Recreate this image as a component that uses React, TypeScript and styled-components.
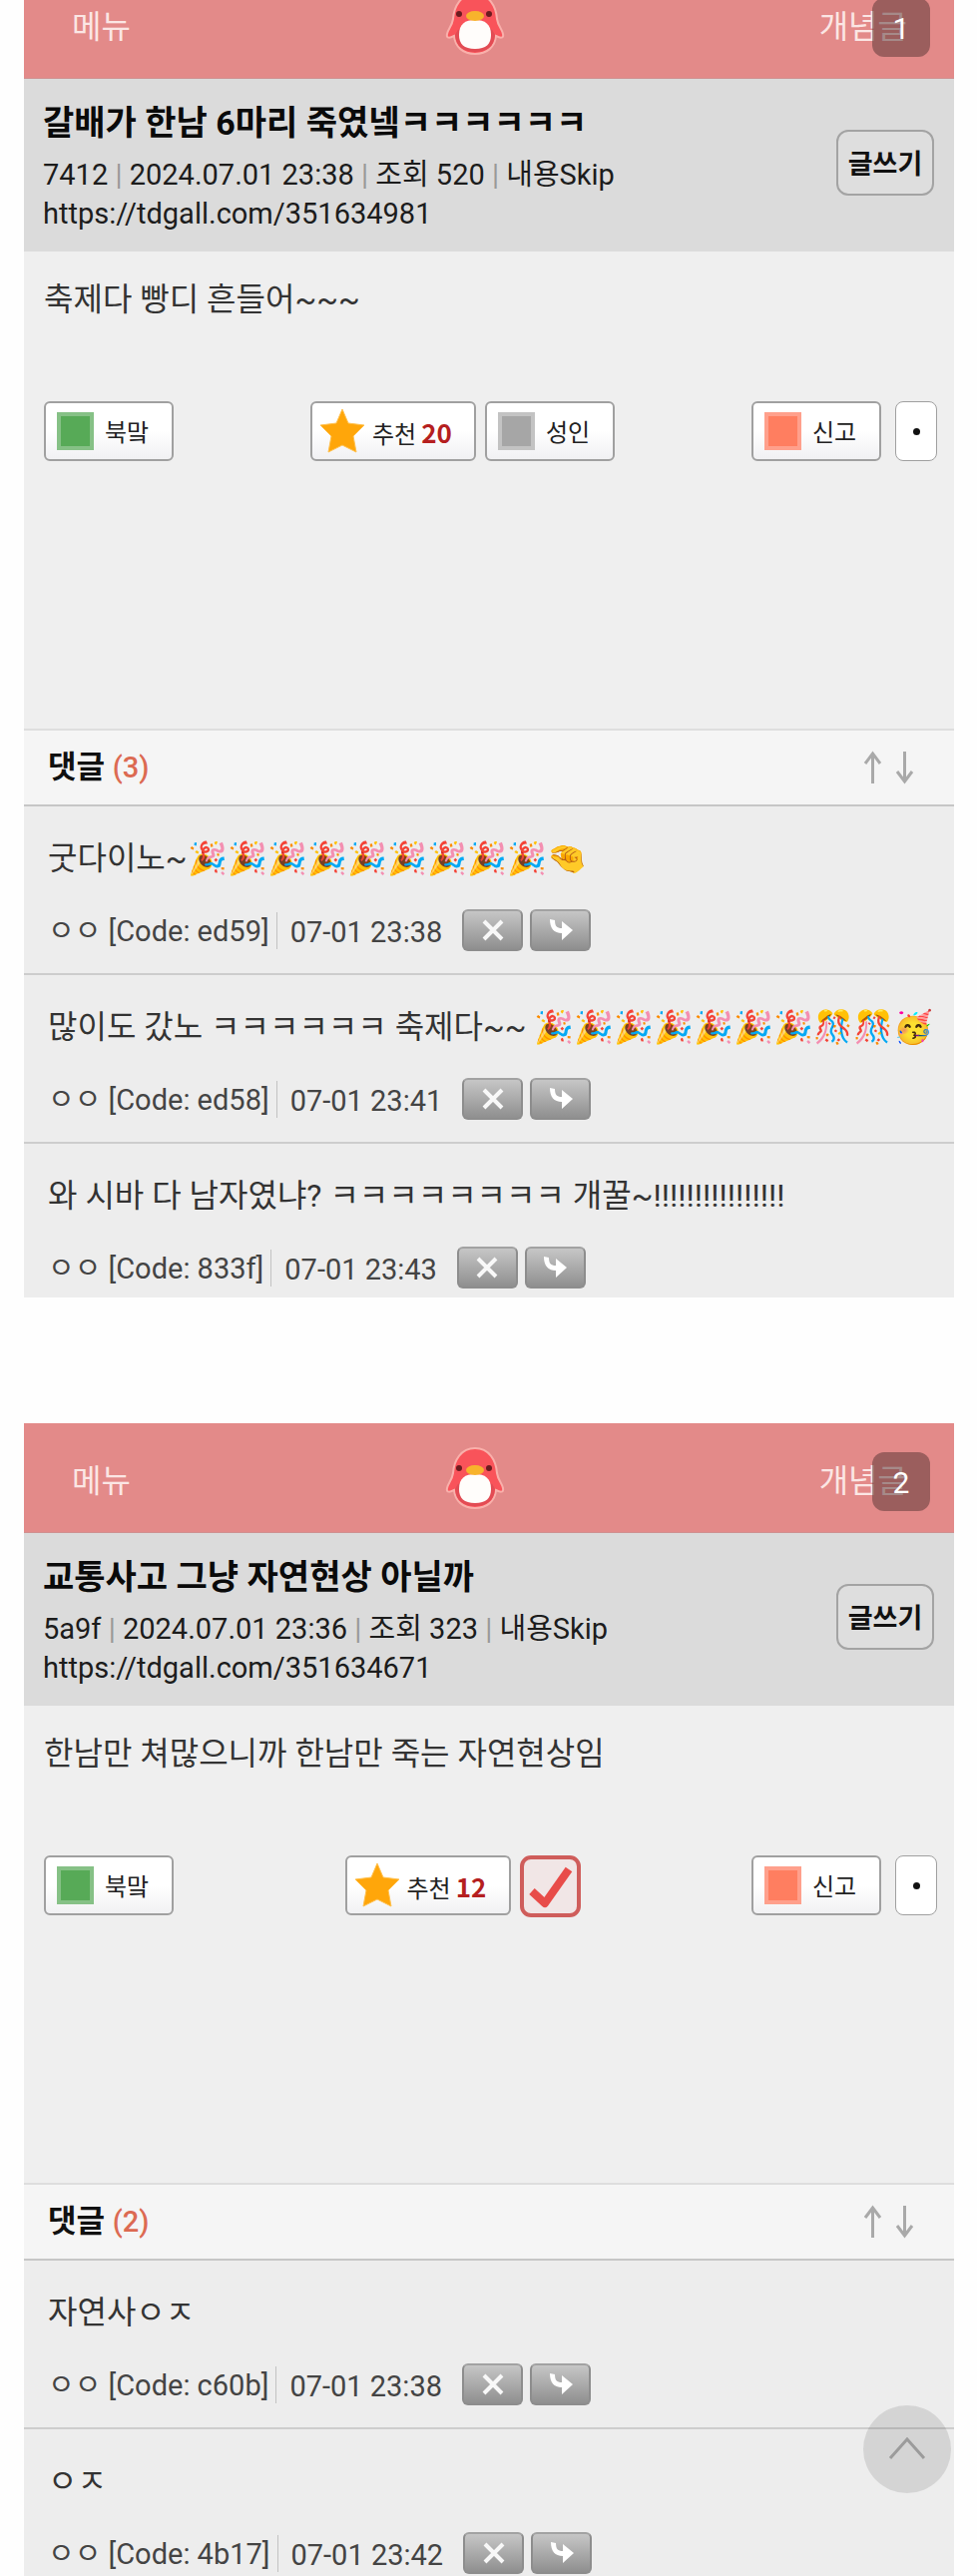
import React from "react";
import styled, { createGlobalStyle } from "styled-components";

const Global = createGlobalStyle`
  *, *::before, *::after { box-sizing: border-box; }
  body { margin: 0; background: #fefefe; font-family: Roboto, "Noto Sans CJK KR", sans-serif; color: #111; }
  h2, h3, p, ul { margin: 0; padding: 0; }
  button { font-family: inherit; cursor: pointer; padding: 0; }
`;

const Page = styled.main`
  display: flex;
  flex-direction: column;
  gap: 126px;
  padding: 0 23px 0 24px;
`;

const Card = styled.article`
  overflow: hidden;
  background: #efefef;
`;

const TopBar = styled.header<{ $scrolled?: boolean }>`
  position: relative;
  display: grid;
  grid-template-columns: 13fr auto 14fr;
  align-items: center;
  height: 110px;
  margin-top: ${(p) => (p.$scrolled ? "-31px" : "0")};
  padding: 0 47px 0 48px;
  background: #e38a89;
  border-bottom: 1px solid #cf9090;
`;

const NavLink = styled.a`
  padding-top: 6px;
  font-size: 32px;
  line-height: 48px;
  color: #fbe6e4;
  text-decoration: none;
  &:last-of-type { text-align: right; }
`;

const PageBadge = styled.span`
  position: absolute;
  top: 29px;
  right: 24px;
  width: 58px;
  height: 59px;
  border-radius: 12px;
  background: rgba(88, 54, 54, 0.52);
  color: #fff;
  font-size: 30px;
  line-height: 62px;
  text-align: center;
`;

const PostHead = styled.section`
  display: flex;
  align-items: center;
  justify-content: space-between;
  height: 173px;
  padding: 0 20px 0 19px;
  background: #dbdbdb;
`;

const Title = styled.h2`
  font-size: 34px;
  line-height: 50px;
  font-weight: 700;
  color: #0a0a0a;
`;

const Meta = styled.p`
  margin-top: 8px;
  font-size: 29px;
  line-height: 39px;
  color: #1c1c1c;
`;

const Bar = styled.span`
  color: #999;
`;

const PlainLink = styled.a`
  display: block;
  color: inherit;
  text-decoration: none;
`;

const WriteButton = styled.button`
  width: 98px;
  height: 66px;
  margin-bottom: 6px;
  border: 2px solid #a3a3a3;
  border-radius: 12px;
  background: #dedede;
  font-size: 27px;
  font-weight: 700;
  color: #111;
`;

const Body = styled.section`
  display: flex;
  flex-direction: column;
  gap: 78px;
  padding: 24px 17px 268px 20px;
`;

const BodyText = styled.p`
  font-size: 32px;
  line-height: 48px;
  color: #333;
`;

const Actions = styled.div`
  display: flex;
  justify-content: space-between;
`;

const Group = styled.div<{ $gap: number }>`
  display: flex;
  gap: ${(p) => p.$gap}px;
`;

const ActionButton = styled.button<{ $wide?: boolean }>`
  display: flex;
  align-items: center;
  gap: ${(p) => (p.$wide ? 8 : 11)}px;
  width: ${(p) => (p.$wide ? 166 : 130)}px;
  height: 60px;
  padding-left: ${(p) => (p.$wide ? 8 : 11)}px;
  border: 2px solid #a0a0a0;
  border-radius: 6px;
  background: linear-gradient(#fff 50%, #f1f1f3);
  font-size: 24px;
  line-height: 36px;
  color: #222;
`;

const ActionLabel = styled.span`
  padding-top: 4px;
`;

const Swatch = styled.span<{ $color: string; $edge: string }>`
  width: 37px;
  height: 38px;
  border: 4px solid ${(p) => p.$edge};
  background: ${(p) => p.$color};
`;

const Count = styled.strong`
  margin-left: 5px;
  font-family: "Noto Sans CJK KR", sans-serif;
  font-size: 26px;
  color: #b51f1f;
`;

const MoreButton = styled.button`
  display: grid;
  place-items: center;
  width: 42px;
  height: 60px;
  border: 1px solid #a0a0a0;
  border-radius: 8px;
  background: #fff;
`;

const Dot = styled.span`
  width: 7px;
  height: 7px;
  border-radius: 50%;
  background: #111;
`;

const CheckButton = styled.button`
  width: 61px;
  height: 62px;
  margin-bottom: -2px;
  border: 0;
  background: none;
`;

const CommentBar = styled.header`
  display: flex;
  align-items: center;
  justify-content: space-between;
  height: 78px;
  padding: 0 40px 0 24px;
  border-top: 2px solid #dedede;
  border-bottom: 2px solid #c6c6c6;
  background: #f5f5f5;
`;

const CommentTitle = styled.h3`
  font-size: 31px;
  line-height: 44px;
  font-weight: 700;
`;

const CommentCount = styled.span`
  font-size: 29px;
  font-weight: 500;
  color: #dc6a52;
`;

const SortButton = styled.button`
  width: 19px;
  height: 34px;
  border: 0;
  background: none;
`;

const CommentList = styled.ul`
  list-style: none;
  background: #ededed;
`;

const Comment = styled.li<{ $end?: number }>`
  display: flex;
  flex-direction: column;
  gap: 27px;
  padding: 28px 20px ${(p) => p.$end ?? 22}px 24px;
  & + & { border-top: 2px solid #cdcdcd; }
`;

const CommentText = styled.p`
  height: 48px;
  font-size: 32px;
  line-height: 48px;
  color: #333;
`;

const CommentMeta = styled.div`
  display: flex;
  align-items: center;
  height: 42px;
  font-size: 29px;
  line-height: 34px;
  color: #444;
`;

const Author = styled.span`
  padding-top: 2px;
`;

const When = styled.time`
  margin: 0 20px 0 7px;
  padding: 3px 0 0 13px;
  border-left: 1px solid #c2c2c2;
`;

const ToolButton = styled.button`
  display: grid;
  place-items: center;
  width: 61px;
  height: 42px;
  margin-right: 7px;
  border: 2px solid #8d8d8d;
  border-top-color: #a2a2a2;
  border-radius: 6px;
  background: linear-gradient(#c6c6c6, #8f8f8f);
`;

const TopButton = styled.button`
  position: fixed;
  right: 26px;
  bottom: 83px;
  width: 88px;
  height: 88px;
  border: 0;
  border-radius: 50%;
  background: rgba(0, 0, 0, 0.1);
`;

const Penguin = () => (
  <svg width="62" height="62" viewBox="0 0 62 62" role="img" aria-label="tdgall">
    <path d="M31 1C17 1 10 13 9 26C8 33 4 36 3 41C2 46 6 45 10 43C11 54 19 61 31 61C43 61 51 54 52 43C56 45 60 46 59 41C58 36 54 33 53 26C52 13 45 1 31 1Z" fill="#f9535a" stroke="#f9b0ab" strokeWidth="2" />
    <path d="M11 42C12 54 20 59 31 59C42 59 50 54 51 42C49 38 48 36 46 36H16C14 36 13 38 11 42Z" fill="#e24c54" />
    <path d="M15 42C15 31 21 27 31 27C41 27 47 31 47 42C47 51 42 56 31 56C20 56 15 51 15 42Z" fill="#fffdfb" />
    <ellipse cx="31" cy="23" rx="9" ry="5" fill="#f8b32c" />
    <circle cx="15" cy="21" r="3" fill="#6b1c1f" />
    <circle cx="45" cy="21" r="3" fill="#6b1c1f" />
  </svg>
);

const Star = () => (
  <svg width="44" height="44" viewBox="0 0 44 44" aria-hidden="true">
    <path d="M22 0L28 14L44 16L33 27L36 43L22 36L8 43L11 27L0 16L16 14Z" fill="#ffa60a" stroke="#ffc04d" strokeWidth="1" />
  </svg>
);

const Check = () => (
  <svg width="61" height="62" viewBox="0 0 61 62" aria-hidden="true">
    <rect x="2" y="2" width="57" height="58" rx="9" fill="#f1e6e6" stroke="#cf5d5b" strokeWidth="4" />
    <path d="M12 36L25 48L49 14" fill="none" stroke="#e84c49" strokeWidth="8" strokeLinejoin="round" />
  </svg>
);

const SortArrow = ({ down }: { down?: boolean }) => (
  <svg width="19" height="34" viewBox="0 0 19 34" aria-hidden="true">
    <path d={down ? "M9.5 1V31M2 21L9.5 31L17 21" : "M9.5 33V3M2 13L9.5 3L17 13"} fill="none" stroke="#a9a9a9" strokeWidth="3" />
  </svg>
);

type PostData = {
  page: number;
  title: string;
  author: string;
  date: string;
  views: number;
  url: string;
  body: string;
  likes: number;
  liked?: boolean;
  comments: { text: string; code: string; time: string; end?: number }[];
};

const posts: PostData[] = [
  {
    page: 1,
    title: "갈배가 한남 6마리 죽였넼ㅋㅋㅋㅋㅋㅋ",
    author: "7412",
    date: "2024.07.01 23:38",
    views: 520,
    url: "https://tdgall.com/351634981",
    body: "축제다 빵디 흔들어~~~",
    likes: 20,
    comments: [
      { text: "굿다이노~🎉🎉🎉🎉🎉🎉🎉🎉🎉🤏", code: "ed59", time: "07-01 23:38" },
      { text: "많이도 갔노 ㅋㅋㅋㅋㅋㅋ 축제다~~ 🎉🎉🎉🎉🎉🎉🎉🎊🎊🥳", code: "ed58", time: "07-01 23:41" },
      { text: "와 시바 다 남자였냐? ㅋㅋㅋㅋㅋㅋㅋㅋ 개꿀~!!!!!!!!!!!!!!!!", code: "833f", time: "07-01 23:43", end: 9 },
    ],
  },
  {
    page: 2,
    title: "교통사고 그냥 자연현상 아닐까",
    author: "5a9f",
    date: "2024.07.01 23:36",
    views: 323,
    url: "https://tdgall.com/351634671",
    body: "한남만 쳐많으니까 한남만 죽는 자연현상임",
    likes: 12,
    liked: true,
    comments: [
      { text: "자연사ㅇㅈ", code: "c60b", time: "07-01 23:38" },
      { text: "ㅇㅈ", code: "4b17", time: "07-01 23:42", end: 2 },
    ],
  },
];

const Post = ({ post }: { post: PostData }) => (
  <Card>
    <TopBar $scrolled={post.page === 1}>
      <NavLink href="#menu">메뉴</NavLink>
      <Penguin />
      <NavLink href="#best">개념글</NavLink>
      <PageBadge>{post.page}</PageBadge>
    </TopBar>
    <PostHead>
      <div>
        <Title>{post.title}</Title>
        <Meta>
          {post.author} <Bar>|</Bar> {post.date} <Bar>|</Bar> 조회 {post.views} <Bar>|</Bar> 내용Skip
          <PlainLink href={post.url}>{post.url}</PlainLink>
        </Meta>
      </div>
      <WriteButton>글쓰기</WriteButton>
    </PostHead>
    <Body>
      <BodyText>{post.body}</BodyText>
      <Actions>
        <ActionButton>
          <Swatch $color="#57aa57" $edge="#86c186" />
          <ActionLabel>북맠</ActionLabel>
        </ActionButton>
        <Group $gap={9}>
          <ActionButton $wide>
            <Star />
            <ActionLabel>추천<Count>{post.likes}</Count></ActionLabel>
          </ActionButton>
          {post.liked ? (
            <CheckButton aria-label="추천 완료"><Check /></CheckButton>
          ) : (
            <ActionButton>
              <Swatch $color="#a6a6a6" $edge="#c3c3c3" />
              <ActionLabel>성인</ActionLabel>
            </ActionButton>
          )}
        </Group>
        <Group $gap={14}>
          <ActionButton>
            <Swatch $color="#ff7e60" $edge="#ffa08c" />
            <ActionLabel>신고</ActionLabel>
          </ActionButton>
          <MoreButton aria-label="더보기"><Dot /></MoreButton>
        </Group>
      </Actions>
    </Body>
    <CommentBar>
      <CommentTitle>댓글 <CommentCount>({post.comments.length})</CommentCount></CommentTitle>
      <Group $gap={13}>
        <SortButton aria-label="오래된 순"><SortArrow /></SortButton>
        <SortButton aria-label="최신 순"><SortArrow down /></SortButton>
      </Group>
    </CommentBar>
    <CommentList>
      {post.comments.map((c) => (
        <Comment key={c.code} $end={c.end}>
          <CommentText>{c.text}</CommentText>
          <CommentMeta>
            <Author>ㅇㅇ [Code: {c.code}]</Author>
            <When>{c.time}</When>
            <ToolButton aria-label="삭제">
              <svg width="28" height="26" viewBox="0 0 28 26"><path d="M5 4L23 22M23 4L5 22" stroke="#f8f8f8" strokeWidth="4" /></svg>
            </ToolButton>
            <ToolButton aria-label="답글">
              <svg width="28" height="26" viewBox="0 0 28 26"><path d="M3 2L8 3C8 9 10 11 15 11V4L26 13L15 23V16C7 16 3 11 3 2Z" fill="#fff" /></svg>
            </ToolButton>
          </CommentMeta>
        </Comment>
      ))}
    </CommentList>
  </Card>
);

export default function App() {
  return (
    <>
      <Global />
      <Page>
        {posts.map((p) => <Post key={p.page} post={p} />)}
      </Page>
      <TopButton aria-label="맨 위로">
        <svg width="40" height="26" viewBox="0 0 40 26"><path d="M3 23L20 4L37 23" fill="none" stroke="#9b9b9b" strokeWidth="3" /></svg>
      </TopButton>
    </>
  );
}
